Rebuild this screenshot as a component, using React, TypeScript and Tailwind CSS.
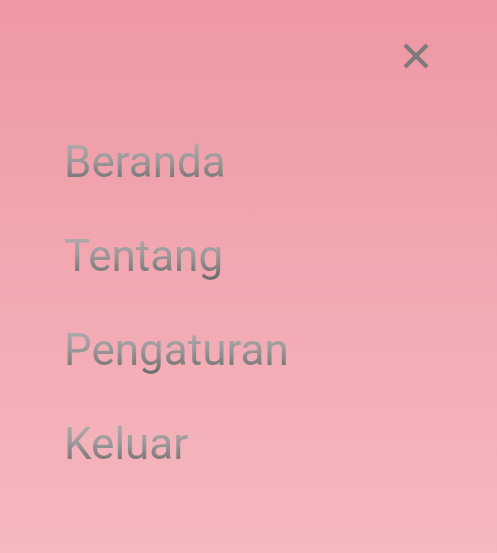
import React from "react"

const menuItems = ["Beranda", "Tentang", "Pengaturan", "Keluar"]

const CloseIcon: React.FC = () => (
    <svg width="26" height="26" viewBox="0 0 26 26" fill="none">
        <path
            d="M2 2 L24 24 M24 2 L2 24"
            stroke="#7c7a7b"
            strokeWidth="4.2"
        />
    </svg>
)

const App: React.FC = () => {
    return (
        <div
            className="h-[553px] w-full bg-gradient-to-b from-[#ee98a4] to-[#f5b8bf] flex flex-col"
            style={{ fontFamily: "Roboto, 'Noto Sans', sans-serif" }}
        >
            <div className="flex justify-end pt-[43px] pr-[68px]">
                <button className="flex items-center justify-center">
                    <CloseIcon />
                </button>
            </div>
            <nav className="flex flex-col gap-[40px] pl-[64px] mt-[66px]">
                {menuItems.map((item) => (
                    <a
                        key={item}
                        href="#"
                        className="self-start text-[44px] leading-[54px] bg-gradient-to-b from-[#b8b4b5] via-[#9a9798] to-[#676465] bg-clip-text text-transparent"
                    >
                        {item}
                    </a>
                ))}
            </nav>
        </div>
    )
}

export default App
